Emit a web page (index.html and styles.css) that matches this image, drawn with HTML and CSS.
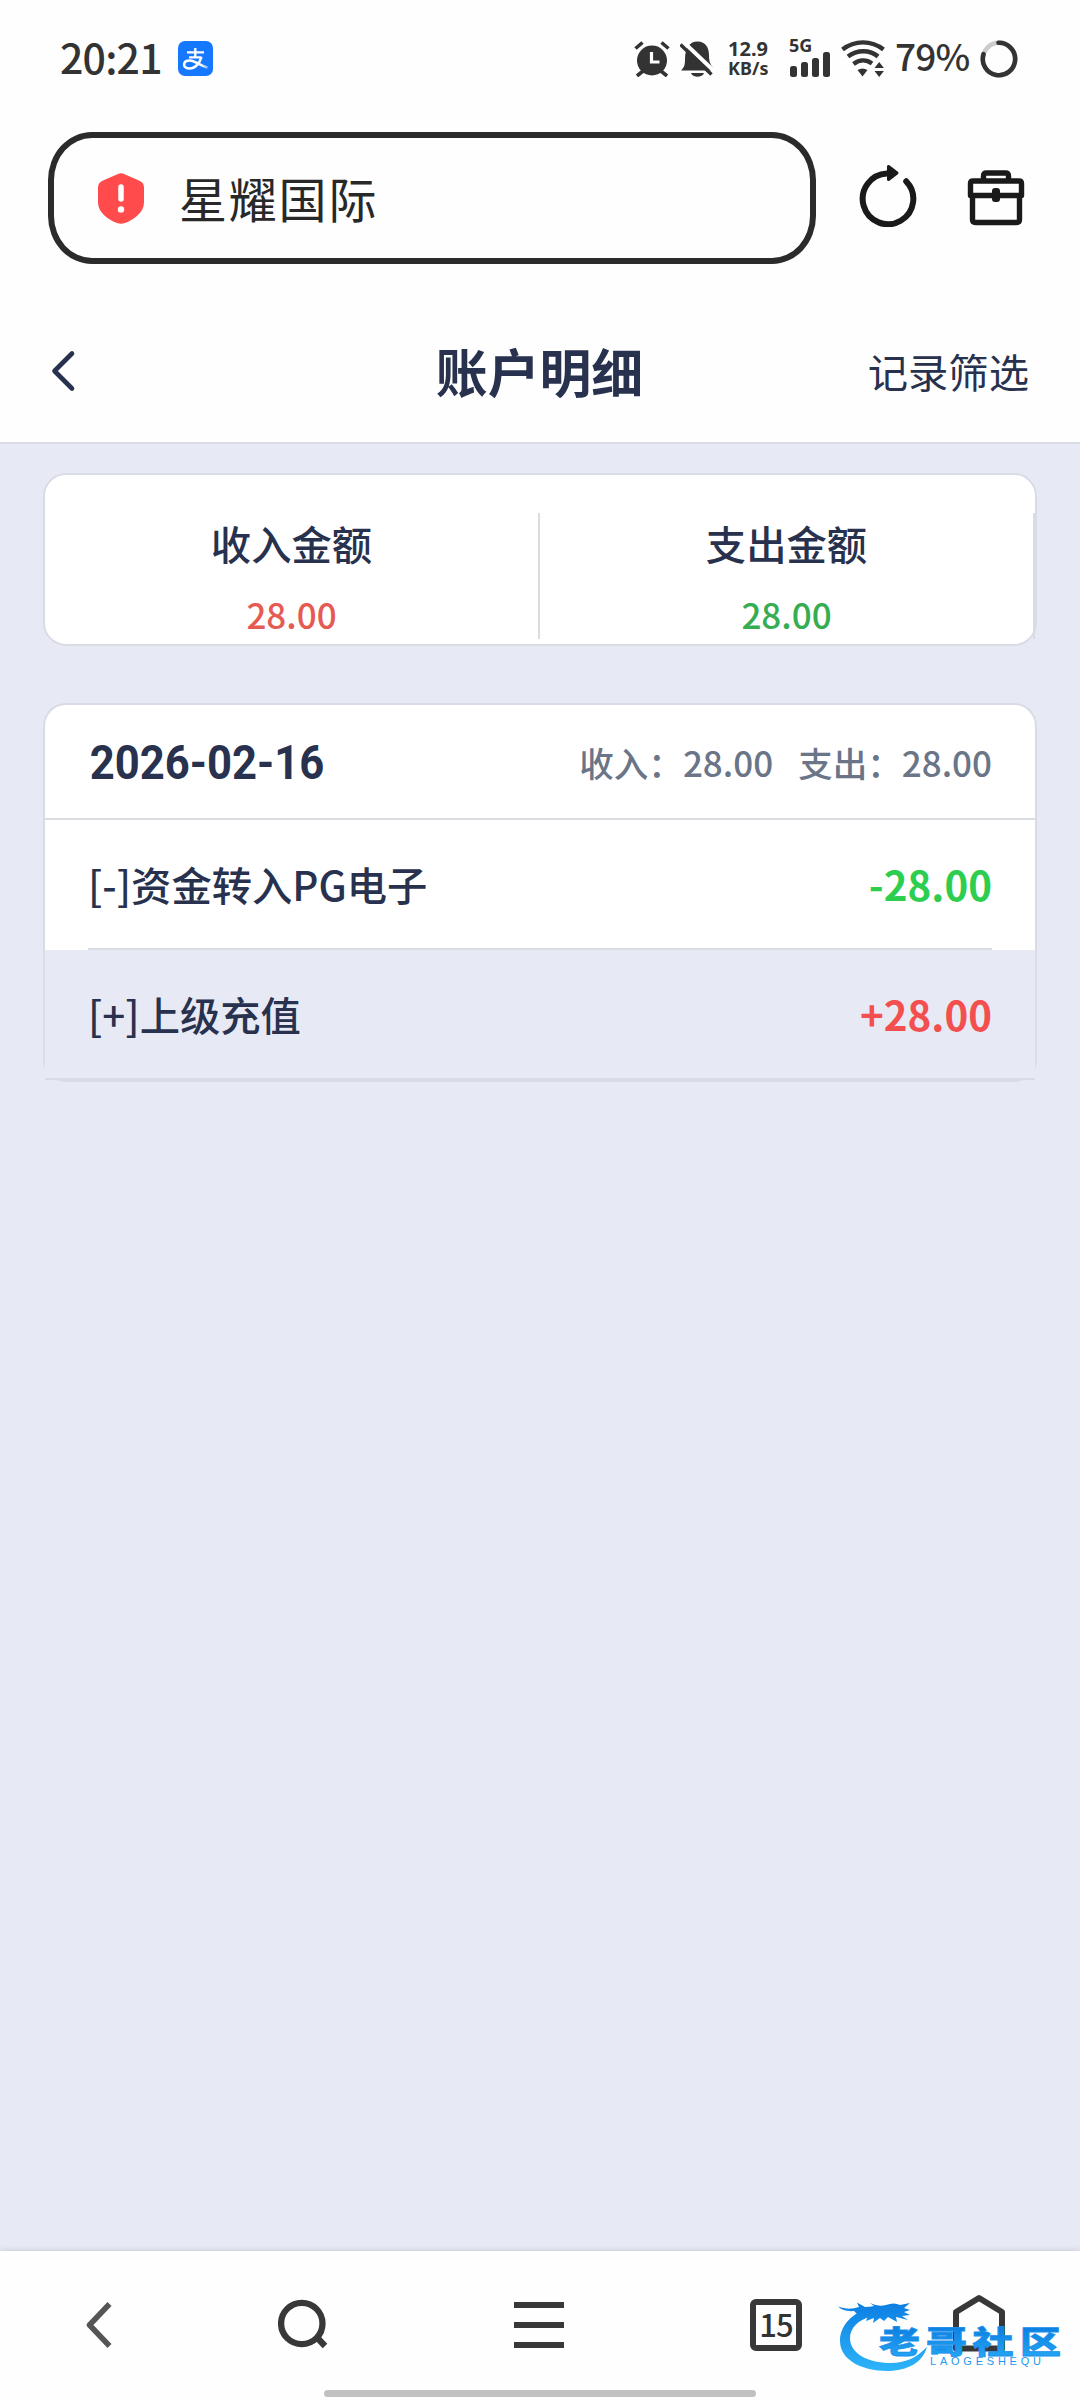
FILE: index.html
```html
<!DOCTYPE html>
<html lang="zh-CN">
<head>
<meta charset="utf-8">
<title>账户明细</title>
<link rel="stylesheet" href="styles.css">
</head>
<body>
<div class="screen">
  <div class="status">
    <span class="clock">20:21</span>
    <svg class="pay" width="35" height="35" viewBox="0 0 35 35">
      <defs><linearGradient id="payTail" x1="0" x2="1"><stop offset="0" stop-color="#fff"/><stop offset=".7" stop-color="#fff"/><stop offset="1" stop-color="#8bbcff"/></linearGradient></defs>
      <rect width="35" height="35" rx="7" fill="#1677ff"/>
      <path d="M9 11.300h17M17.300 7v9M11 16.300h12.500" fill="none" stroke="#fff" stroke-width="2.300"/>
      <path d="M23.500 16c-1.500 5-5.500 11.500-12 11.500-7 0-7.500-8 .5-8 5.500 0 8.500 5 17.500 7" fill="none" stroke="url(#payTail)" stroke-width="2.600"/>
    </svg>
    <div class="status-right">
      <svg class="alarm" width="36" height="36" viewBox="0 0 36 36">
        <circle cx="18" cy="19.500" r="15" fill="#333"/>
        <path d="M1.500 7.500 8.500 1.500M34.500 7.500 27.500 1.500M3 35l6-5M33 35l-6-5" stroke="#333" stroke-width="3.600" fill="none"/>
        <path d="M17.500 11v10h8" fill="none" stroke="#fff" stroke-width="3.200"/>
      </svg>
      <svg class="bell" width="34" height="36" viewBox="0 0 34 36">
        <path d="M1 29.500c3-3 4-5 4-11C5 8 9 .5 17.500.5S29 7 29 14c0 6 1 9 4 12.500v3z" fill="#333"/>
        <path d="M11 32h13c-1.500 5-11.500 5-13 0z" fill="#333"/>
        <path d="M3.500 1 36 32" stroke="#fff" stroke-width="4"/>
        <path d="M.5 3.500 31.500 33.500" stroke="#333" stroke-width="3.400"/>
      </svg>
      <div class="speed"><span>12.9</span><span class="unit">KB/s</span></div>
      <div class="signal">
        <span>5G</span>
        <svg width="42" height="26" viewBox="0 0 42 26" fill="#333"><rect x="1" y="15" width="7" height="11" rx="2.500"/><rect x="12" y="11" width="7" height="15" rx="2.500"/><rect x="23" y="7" width="7" height="19" rx="2.500"/><rect x="34" y="1" width="7" height="25" rx="2.500"/></svg>
      </div>
      <svg class="wifi" width="44" height="37" viewBox="0 0 44 37">
        <path d="M1.500 9.500c12-9.500 29-9.500 41 0M7 16.500c9-7 22-7 30 0M12.500 24c6-4.500 13-4.500 18.500-.5" fill="none" stroke="#333" stroke-width="4.400"/>
        <path d="M16.500 30c3.500-2 6.500-2 10 0l-5 6.500zM33.500 28l4.700-6 4.700 6zM33.500 31l4.700 6 4.700-6z" fill="#333"/>
      </svg>
      <span class="battery">79%</span>
      <svg class="ring" width="38" height="38" viewBox="0 0 38 38" fill="none" stroke-width="4.600">
        <circle cx="19" cy="19" r="16.200" stroke="#ccc"/>
        <path d="M18.500 2.800A16.200 16.200 0 1 1 3.500 14.200" stroke="#333" stroke-linecap="round"/>
      </svg>
    </div>
  </div>

  <div class="toolbar">
    <div class="address">
      <svg width="46" height="51" viewBox="0 0 46 51">
        <path d="M20 1q3-1.300 6 0l15 6.500q5 2 5 7v15C46 40 35 47 27 50q-4 1.600-8 0C11 47 0 40 0 29.500v-15q0-5 5-7z" fill="#ff4b4b"/>
        <path d="M23 14v12" stroke="#fff" stroke-width="5.500" stroke-linecap="round"/><circle cx="23" cy="36.500" r="3.200" fill="#fff"/>
      </svg>
      <span>星耀国际</span>
    </div>
    <svg class="reload" width="60" height="64" viewBox="0 0 60 64">
      <path d="M49.200 18.300A25.300 25.300 0 1 1 30 10.600" fill="none" stroke="#1a1a1a" stroke-width="6" stroke-linecap="round"/>
      <path d="M31.500 3.500v13l8.500-6.500z" fill="#1a1a1a" stroke="#1a1a1a" stroke-width="3" stroke-linejoin="round"/>
    </svg>
    <svg class="case" width="58" height="56" viewBox="0 0 58 56" fill="none" stroke="#1a1a1a" stroke-width="5.400" stroke-linejoin="round">
      <path d="M16.500 11V6q0-3 3-3h19q3 0 3 3v5"/>
      <path d="M3.500 25.500V13.500q0-2.500 2.500-2.500h46q2.500 0 2.500 2.500v12zM5.500 25.500v24q0 3 3 3h41q3 0 3-3v-24"/>
      <rect x="25" y="18" width="8" height="14" rx="3" fill="#1a1a1a" stroke="none"/>
    </svg>
  </div>

  <header class="head">
    <svg width="26" height="42" viewBox="0 0 26 42"><path d="M22 3.500 4.500 21 22 38.500" fill="none" stroke="#28314d" stroke-width="4.600" stroke-linecap="round" stroke-linejoin="round"/></svg>
    <h1>账户明细</h1>
    <span class="filter">记录筛选</span>
  </header>

  <main class="content">
    <section class="card summary">
      <div class="sum"><span>收入金额</span><b class="in">28.00</b></div>
      <div class="sum"><span>支出金额</span><b class="out">28.00</b></div>
    </section>
    <section class="card day">
      <div class="day-head">
        <span class="date">2026-02-16</span>
        <div class="totals"><span>收入：</span><b>28.00</b><span class="second">支出：</span><b>28.00</b></div>
      </div>
      <div class="row"><span>[-]资金转入PG电子</span><strong class="minus">-28.00</strong></div>
      <div class="row alt"><span>[+]上级充值</span><strong class="plus">+28.00</strong></div>
    </section>
  </main>

  <nav class="nav">
    <svg width="26" height="48" viewBox="0 0 26 48"><path d="M23.500 3 3.500 24 23.500 45" fill="none" stroke="#555" stroke-width="5.500" stroke-linejoin="round"/></svg>
    <svg width="50" height="54" viewBox="0 0 50 54" fill="none" stroke="#383838" stroke-width="6.300"><ellipse cx="23.800" cy="25.500" rx="20.700" ry="20.700"/><path d="M39 39.500l8 8.500"/></svg>
    <svg width="50" height="48" viewBox="0 0 50 48"><path d="M0 4h50M0 24h50M0 44h50" stroke="#383838" stroke-width="6"/></svg>
    <div class="tabs">15</div>
    <svg class="home" width="52" height="58" viewBox="0 0 52 58"><path d="M3 54.500V18L26 4l23 14v36.500z" fill="none" stroke="#383838" stroke-width="6" stroke-linejoin="round"/></svg>
  </nav>
  <div class="pill"></div>

  <svg class="mark" width="235" height="84" viewBox="0 0 235 84">
    <defs>
      <linearGradient id="sea" gradientUnits="userSpaceOnUse" x1="0" y1="8" x2="0" y2="80"><stop offset="0" stop-color="#0d7ee2"/><stop offset="1" stop-color="#2eb8fa"/></linearGradient>
      <linearGradient id="word" x1="0" y1="0" x2="0" y2="1"><stop offset=".2" stop-color="#0b7de0"/><stop offset="1" stop-color="#27aaf5"/></linearGradient>
    </defs>
    <path d="M36 14C20 20 10 32 10 46c0 19 22 30 47 30 21 0 36-9 40-24-11 11-22 16-36 16-24 0-41-10-41-25 0-10 8-18 22-22z" fill="url(#sea)"/>
    <path d="M8 11.500Q18 15.500 29 12L27 7.500 35 12Q40 12 44 11L40 8Q48 12 56 10 64 7 70 10L80 8 74 13 80 15 74 17 80 20 72 21 78 25 66 22 67 27 58 22 54 26 50 23 43 28 44 23 36 26 38 21 28 20 24 16Q14 17 8 11.500Z" fill="url(#sea)"/>
    <text class="mark-word" transform="translate(0 57.500) scale(1 .75)" x="49 96 142.500 190" y="0" fill="url(#word)" stroke="#1a90eb" stroke-width="1">老哥社区</text>
    <text class="mark-sub" x="100" y="69.500" textLength="111" fill="#1e98ef">LAOGESHEQU</text>
  </svg>
</div>
</body>
</html>
```
FILE: styles.css
```css
* { box-sizing: border-box; }
body {
  margin: 0;
  background: #fff;
  font-family: "Noto Sans CJK SC", sans-serif;
  color: #28314d;
}
svg { display: block; flex: none; }
.screen {
  position: relative;
  width: 1080px;
  height: 2400px;
  overflow: hidden;
  display: flex;
  flex-direction: column;
  background: #fefefe;
}

/* status bar */
.status {
  height: 117px;
  display: flex;
  align-items: center;
  padding: 0 62px 0 60px;
  color: #333;
}
.clock {
  width: 118px;
  padding-bottom: 5px;
  font: 500 41px/1 "Noto Sans CJK SC", sans-serif;
  letter-spacing: -.8px;
}
.status-right { display: flex; align-items: center; margin-left: auto; }
.bell { margin-left: 10px; }
.speed {
  width: 44px;
  margin-left: 14px;
  padding-bottom: 2px;
  display: flex;
  flex-direction: column;
  font: 700 20px/20px "Noto Sans", sans-serif;
}
.speed .unit { font-size: 18px; line-height: 18px; }
.signal { margin-left: 17px; font: 700 18px/11px "Noto Sans", sans-serif; }
.signal span { display: block; height: 11px; }
.wifi { margin-left: 10px; }
.battery {
  width: 76px;
  margin-left: 10px;
  padding-bottom: 6px;
  font: 500 37px/1 "Noto Sans CJK SC", sans-serif;
  letter-spacing: -.8px;
}
.ring { margin-left: 9px; }

/* address bar */
.toolbar {
  height: 164px;
  display: flex;
  align-items: flex-start;
  padding: 15px 55px 0 48px;
}
.address {
  width: 768px;
  height: 132px;
  display: flex;
  align-items: center;
  padding: 0 44px;
  border: 6px solid #2b2b2b;
  border-radius: 44px / 48px;
  color: #282828;
}
.address span {
  margin: 0 0 3px 35px;
  font-size: 48px;
  line-height: 60px;
  letter-spacing: 1.800px;
}
.reload { margin: 31px 0 0 41px; }
.case { margin: 38px 0 0 50px; }

/* page header */
.head {
  height: 163px;
  display: grid;
  grid-template-columns: 260px 1fr 260px;
  align-items: center;
  padding: 18px 51px 0 50px;
  border-bottom: 2px solid #d9dce3;
}
.head h1 {
  margin: 0;
  text-align: center;
  font-size: 51.840px;
  line-height: 76px;
  font-weight: 700;
}
.filter { text-align: right; font-size: 40.320px; line-height: 60px; }

.content {
  flex: 1;
  padding: 29px 43px 0;
  background: #e7eaf4;
}
.card {
  background: #fff;
  border: 2px solid #d9dce4;
  border-radius: 23px;
}
.summary {
  height: 173px;
  display: flex;
  padding-top: 38px;
}
.sum {
  flex: 1;
  height: 126px;
  display: flex;
  flex-direction: column;
  align-items: center;
  border-right: 2px solid #d9dce0;
}
.sum span { font-size: 40.320px; line-height: 60px; font-weight: 500; }
.sum b { margin-top: 11px; font-size: 35px; line-height: 60px; font-weight: 500; }
.in { color: #e65a54; }
.out { color: #35ad52; }

.day { margin-top: 57px; }
.day-head {
  height: 115px;
  display: flex;
  align-items: center;
  justify-content: space-between;
  padding: 0 43px;
  border-bottom: 2px solid #d9dce0;
}
.date {
  padding: 3px 0 0 2px;
  font: 700 49px/60px Roboto, sans-serif;
  transform: scaleX(.89);
  transform-origin: left;
}
.totals {
  display: flex;
  align-items: center;
  color: #6b7588;
  font-size: 34.560px;
}
.totals b { font-size: 35px; font-weight: 500; line-height: 50px; }
.totals span { font-weight: 500; }
.second { margin-left: 25px; }
.row {
  position: relative;
  height: 130px;
  display: flex;
  align-items: center;
  justify-content: space-between;
  padding: 0 43px 3px;
  font-size: 40.320px;
}
.row::after {
  content: "";
  position: absolute;
  left: 43px;
  right: 43px;
  bottom: 0;
  height: 2px;
  background: #d9dce4;
}
.row span { font-weight: 500; }
.row.alt { background: #e7eaf4; }
.row.alt::after { left: 0; right: 0; }
.row strong { font-size: 40.320px; }
.minus { color: #2dce4f; }
.plus { color: #f44f4f; }

/* browser bottom bar */
.nav {
  height: 149px;
  display: grid;
  grid-template-columns: 198px 210px 262px 212px 194px;
  justify-items: center;
  align-items: start;
  padding-top: 50px;
  background: #fefefe;
  box-shadow: 0 0 6px rgba(0, 0, 0, .16);
}
.nav svg:nth-child(2) { margin-top: -3px; }
.tabs {
  width: 52px;
  height: 52px;
  margin-top: -2px;
  border: 6px solid #383838;
  border-radius: 6px;
  color: #333;
  text-align: center;
  font: 500 31px/37px "Noto Sans CJK SC", sans-serif;
  letter-spacing: -1px;
}
.nav .home { margin-top: -7px; }
.pill {
  position: absolute;
  left: 324px;
  top: 2390px;
  width: 432px;
  height: 7px;
  border-radius: 4px;
  background: #c1c1c1;
}
.mark {
  position: absolute;
  left: 830px;
  top: 2295px;
}
.mark-word { font: 900 41px "Noto Sans CJK SC", sans-serif; }
.mark-sub { font: 400 11px "Liberation Sans", sans-serif; }
```
